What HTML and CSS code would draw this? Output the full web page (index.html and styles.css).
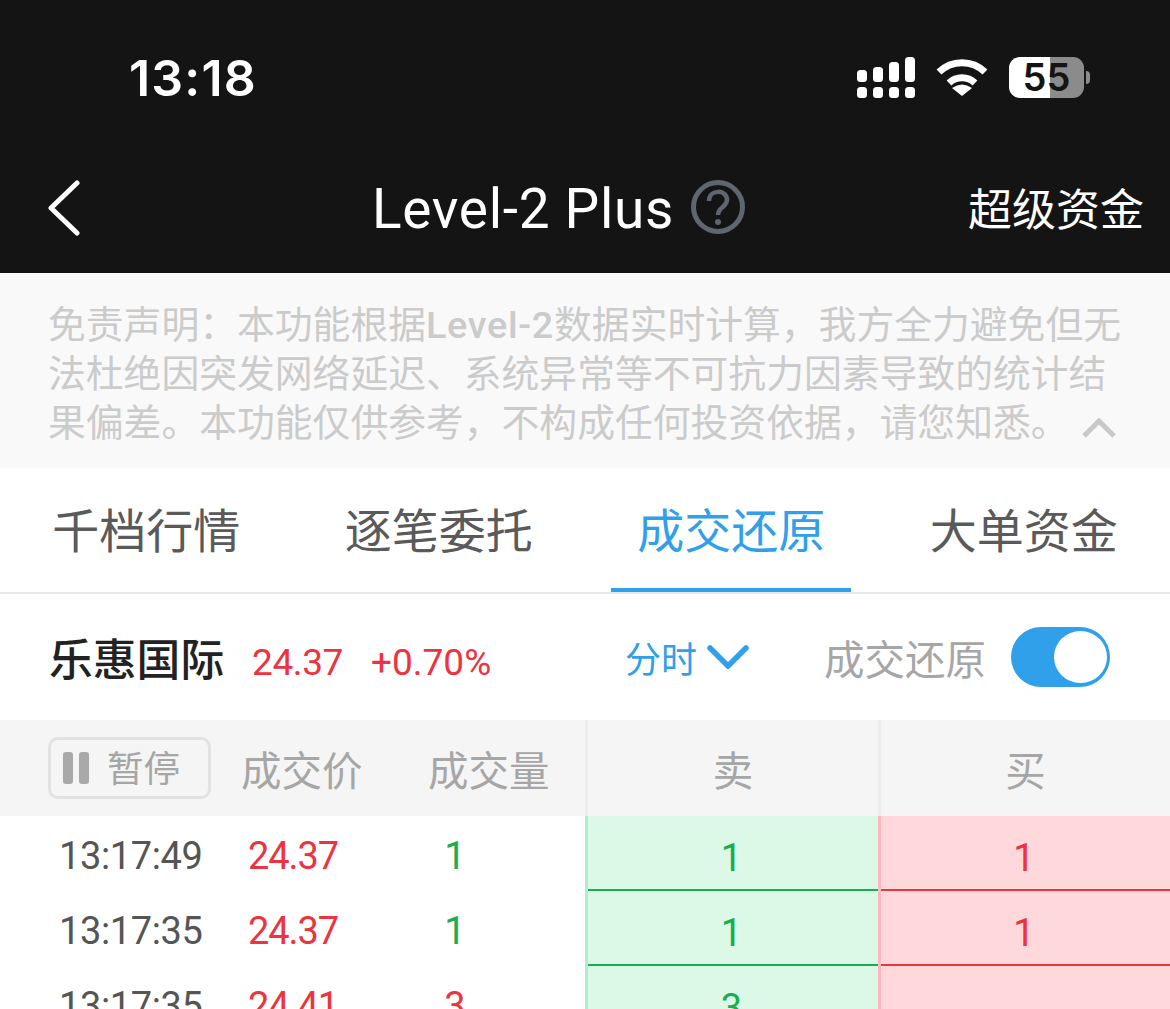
FILE: index.html
```html
<!DOCTYPE html>
<html lang="zh-CN">
<head>
    <meta charset="UTF-8">
    <meta name="viewport" content="width=device-width, initial-scale=1.0">
    <title>Level-2 Plus</title>
    <link rel="stylesheet" href="styles.css">
</head>
<body>
    <header class="top">
        <div class="status-bar">
            <div class="status-time">13:18</div>
            <div class="status-icons">
                <svg class="signal-icon" width="58" height="41" viewBox="0 0 58 41" fill="#fff">
                    <rect x="0" y="13" width="10" height="12" rx="3.5"/>
                    <rect x="16" y="10" width="10" height="15" rx="3.5"/>
                    <rect x="32" y="5" width="10" height="20" rx="3.5"/>
                    <rect x="48" y="0" width="10" height="25" rx="3.5"/>
                    <rect x="0" y="30" width="10" height="11" rx="3.5"/>
                    <rect x="16" y="30" width="10" height="11" rx="3.5"/>
                    <rect x="32" y="30" width="10" height="11" rx="3.5"/>
                    <rect x="48" y="30" width="10" height="11" rx="3.5"/>
                </svg>
                <svg class="wifi-icon" width="52" height="38" viewBox="0 0 52 38" fill="none" stroke="#fff" stroke-width="7">
                    <path d="M3 13 A33 33 0 0 1 49 13"/>
                    <path d="M13 24 A19 19 0 0 1 39 24"/>
                    <path d="M26 37 L16 29 Q26 22 36 29 Z" fill="#fff" stroke="none"/>
                </svg>
                <div class="battery">55</div>
            </div>
        </div>
        <nav class="nav-bar">
            <svg class="back-icon" width="32" height="56" viewBox="0 0 32 56" fill="none" stroke="#fff" stroke-width="5" stroke-linecap="round" stroke-linejoin="round">
                <path d="M29 3 L3 28 L29 53"/>
            </svg>
            <div class="nav-title">
                <span>Level-2 Plus</span>
                <svg width="54" height="54" viewBox="0 0 54 54" fill="none" stroke="#5f6670" stroke-width="5">
                    <circle cx="27" cy="27" r="24.5"/>
                    <path d="M18 21 C18 9 36 9 36 20 C36 27 27 27 27 35" stroke-width="4.5"/>
                    <circle cx="27" cy="42" r="3" fill="#5f6670" stroke="none"/>
                </svg>
            </div>
            <div class="nav-link">超级资金</div>
        </nav>
    </header>

    <section class="notice">
        <p>免责声明：本功能根据<b>Level-2</b>数据实时计算，我方全力避免但无<br>法杜绝因突发网络延迟、系统异常等不可抗力因素导致的统计结<br>果偏差。本功能仅供参考，不构成任何投资依据，请您知悉。</p>
        <svg class="notice-toggle" width="34" height="20" viewBox="0 0 34 20" fill="none" stroke="#c9c9c9" stroke-width="5">
            <path d="M2 18 L17 3 L32 18"/>
        </svg>
    </section>

    <div class="tabs">
        <div class="tab">千档行情</div>
        <div class="tab">逐笔委托</div>
        <div class="tab active">成交还原<i></i></div>
        <div class="tab">大单资金</div>
    </div>

    <div class="stock-row">
        <div class="stock-name">乐惠国际</div>
        <div class="stock-price">24.37</div>
        <div class="stock-change">+0.70%</div>
        <div class="period">
            分时
            <svg width="42" height="24" viewBox="0 0 42 24" fill="none" stroke="#30a0ea" stroke-width="5.5" stroke-linecap="round">
                <path d="M3 3 L21 21 L39 3"/>
            </svg>
        </div>
        <div class="switch-label">成交还原</div>
        <div class="switch"><i></i></div>
    </div>

    <div class="table-head">
        <div class="head-left">
            <div class="pause-btn"><i></i><i></i><span>暂停</span></div>
            <div class="head-price">成交价</div>
            <div class="head-vol">成交量</div>
        </div>
        <div class="head-side">卖</div>
        <div class="head-side">买</div>
    </div>

    <div class="table-row">
        <div class="row-left">
            <div class="col-time">13:17:49</div>
            <div class="col-price red">24.37</div>
            <div class="col-vol green">1</div>
        </div>
        <div class="sell"><span>1</span></div>
        <div class="buy"><span>1</span></div>
    </div>
    <div class="table-row">
        <div class="row-left">
            <div class="col-time">13:17:35</div>
            <div class="col-price red">24.37</div>
            <div class="col-vol green">1</div>
        </div>
        <div class="sell"><span>1</span></div>
        <div class="buy"><span>1</span></div>
    </div>
    <div class="table-row">
        <div class="row-left">
            <div class="col-time">13:17:35</div>
            <div class="col-price red">24.41</div>
            <div class="col-vol red">3</div>
        </div>
        <div class="sell"><span>3</span></div>
        <div class="buy"></div>
    </div>
</body>
</html>
```

FILE: styles.css
```css
:root {
    --dark: #141414;
    --blue: #30a0ea;
    --red: #ee3340;
    --green: #18ae50;
    --grey-text: #a6a6a6;
    --font-cjk: 'Noto Sans CJK SC', sans-serif;
    --font-num: Roboto, 'Noto Sans CJK SC', sans-serif;
}
html, body { height: 1009px; overflow: hidden; }
body { margin: 0; background: #fff; font-family: var(--font-cjk); }
p { margin: 0; }

.top { background: var(--dark); color: #fff; height: 273px; }
.status-bar { height: 155px; display: flex; justify-content: space-between; align-items: flex-start; padding: 0 86px 0 129px; box-sizing: border-box; }
.status-time { font-family: Inter, sans-serif; font-weight: 600; font-size: 50px; letter-spacing: 1.2px; line-height: 58px; margin-top: 49px; }
.status-icons { display: flex; align-items: center; margin-top: 57px; }
.wifi-icon { margin-left: 21px; }
.battery { position: relative; width: 75px; height: 41px; margin-left: 21px; border-radius: 11px; background: linear-gradient(90deg, #fff 55%, #8b8b8b 55%); color: var(--dark); font-family: Inter, sans-serif; font-weight: 600; font-size: 38px; line-height: 41px; text-align: center; }
.battery::after { content: ""; position: absolute; left: 77px; top: 14px; width: 4px; height: 13px; border-radius: 0 6px 6px 0; background: #8b8b8b; }

.nav-bar { height: 118px; display: flex; align-items: flex-start; padding: 0 26px 0 48px; }
.back-icon { margin-top: 25px; }
.nav-title { display: flex; align-items: center; gap: 17px; margin: 25px 0 0 292px; font-family: Roboto, sans-serif; font-size: 55px; letter-spacing: .7px; line-height: 54px; }
.nav-title span { position: relative; top: 2px; }
.nav-link { margin-left: auto; font-size: 44px; line-height: 54px; margin-top: 25px; }

.notice { position: relative; height: 195px; background: #f9f9f9; color: #cbcbcb; padding: 24px 0 0 48px; box-sizing: border-box; font-size: 37.8px; line-height: 49px; white-space: nowrap; }
.notice b { font-family: Roboto, sans-serif; font-weight: 500; letter-spacing: .7px; line-height: 0; }
.notice-toggle { position: absolute; left: 1082px; top: 145px; }

.tabs { display: flex; height: 126px; border-bottom: 2px solid #e8e8e8; box-sizing: border-box; }
.tab { flex: 1; display: flex; flex-direction: column; align-items: center; justify-content: space-between; padding-top: 32px; font-size: 47px; line-height: 56px; color: #5a5a5a; box-sizing: border-box; }
.tab.active { color: var(--blue); }
.tab i { width: 240px; height: 4px; background: var(--blue); }

.stock-row { height: 126px; display: flex; align-items: center; padding-left: 49px; }
.stock-name { font-size: 43.8px; font-weight: 500; color: #222; width: 203px; }
.stock-price, .stock-change { font-family: var(--font-num); font-size: 37px; color: var(--red); padding-top: 10px; }
.stock-price { width: 119px; letter-spacing: -.4px; }
.stock-change { width: 254px; }
.period { display: flex; align-items: center; gap: 10px; width: 199px; font-size: 36px; color: var(--blue); }
.switch-label { width: 187px; font-size: 40.5px; color: var(--grey-text); }
.switch { width: 99px; height: 60px; border-radius: 30px; background: var(--blue); display: flex; align-items: center; justify-content: flex-end; padding-right: 3px; box-sizing: border-box; }
.switch i { width: 53px; height: 52px; border-radius: 50%; background: #fff; }

.table-head { height: 96px; display: flex; background: #f5f5f5; color: var(--grey-text); font-size: 40.5px; }
.head-left { width: 585px; display: flex; align-items: center; padding-left: 48px; box-sizing: border-box; }
.pause-btn { width: 163px; height: 62px; box-sizing: border-box; border: 3px solid #e2e2e2; border-radius: 10px; display: flex; align-items: center; padding-left: 12px; gap: 6px; font-size: 36.5px; }
.pause-btn i { width: 10px; height: 32px; border-radius: 3px; background: #a9a9a9; }
.pause-btn span { margin-left: 12px; line-height: 48px; padding-bottom: 3px; }
.head-price { margin-left: 30px; width: 187px; }
.head-side { width: 293px; border-left: 3px solid #ececec; text-align: center; line-height: 98px; box-sizing: border-box; }
.head-side:last-child { width: 292px; }

.table-row { height: 75px; display: flex; font-family: var(--font-num); font-size: 38px; }
.row-left { width: 585px; display: flex; line-height: 80px; height: 75px; }
.col-time { width: 248px; padding-left: 59px; box-sizing: border-box; color: #555; letter-spacing: -.4px; }
.col-price { width: 150px; letter-spacing: -1.1px; }
.col-vol { width: 114px; text-align: center; }
.red { color: var(--red); }
.green { color: var(--green); }
.sell, .buy { box-sizing: border-box; text-align: center; line-height: 84px; }
.sell { width: 293px; background: #dcf9e7; border-left: 3px solid #b5ebc9; color: var(--green); }
.buy { width: 292px; background: #ffd8dc; border-left: 3px solid #ffb6bf; color: var(--red); }
.sell span, .buy span { display: block; height: 75px; padding-right: 3px; box-sizing: border-box; border-bottom: 2px solid; }
```
